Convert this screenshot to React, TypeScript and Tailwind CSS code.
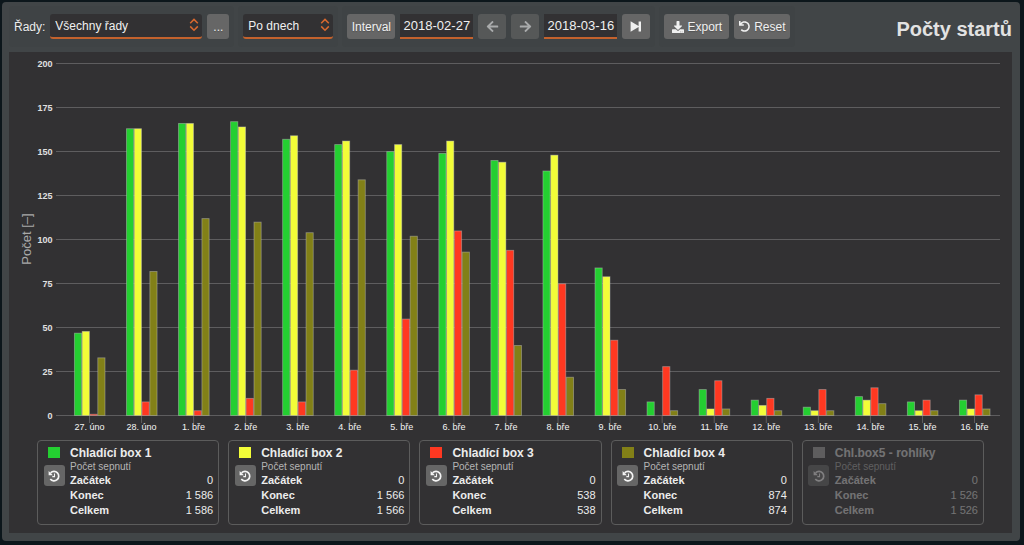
import { FaArrowLeft, FaArrowRight, FaDownload, FaUndo } from 'react-icons/fa';

const SERIES = [
  { name: 'Chladící box 1', color: '#24cf31', start: '0', end: '1 586', total: '1 586', off: false },
  { name: 'Chladící box 2', color: '#f2fd38', start: '0', end: '1 566', total: '1 566', off: false },
  { name: 'Chladící box 3', color: '#ff3821', start: '0', end: '538', total: '538', off: false },
  { name: 'Chladící box 4', color: '#828017', start: '0', end: '874', total: '874', off: false },
  { name: 'Chl.box5 - rohlíky', color: '#a0a0a0', start: '0', end: '1 526', total: '1 526', off: true },
];

// den + počty startů pro box 1-4
const DAYS: [string, number[]][] = [
  ['27. úno', [47, 48, 1, 33]],
  ['28. úno', [163, 163, 8, 82]],
  ['1. bře', [166, 166, 3, 112]],
  ['2. bře', [167, 164, 10, 110]],
  ['3. bře', [157, 159, 8, 104]],
  ['4. bře', [154, 156, 26, 134]],
  ['5. bře', [150, 154, 55, 102]],
  ['6. bře', [149, 156, 105, 93]],
  ['7. bře', [145, 144, 94, 40]],
  ['8. bře', [139, 148, 75, 22]],
  ['9. bře', [84, 79, 43, 15]],
  ['10. bře', [8, 0, 28, 3]],
  ['11. bře', [15, 4, 20, 4]],
  ['12. bře', [9, 6, 10, 3]],
  ['13. bře', [5, 3, 15, 3]],
  ['14. bře', [11, 9, 16, 7]],
  ['15. bře', [8, 3, 9, 3]],
  ['16. bře', [9, 4, 12, 4]],
];

const TICKS = [0, 25, 50, 75, 100, 125, 150, 175, 200];

const LEFT = 47;
const RIGHT = 991;
const BASE = 364;
const UNIT = 1.7625;
const STEP = 52.06;
const BAR = 7.8;

export default function App() {
  return (
    <div className="min-h-screen bg-[#0c161b] pt-0.5 pr-1 pb-1 pl-0.5 font-['Liberation_Sans',Arial,sans-serif] text-[#ececec]">
      <main className="rounded bg-[#414547] pt-1 pr-2 pb-2 pl-[7px]">
        <header className="flex items-center justify-between pb-[5px]">
          <div className="flex gap-1">
            <Group>
              <label htmlFor="rows" className="text-xs text-shadow-xs">Řady:</label>
              <Select id="rows" options={['Všechny řady', 'Chladící box 1', 'Chladící box 2']} className="w-[152px]" />
              <button type="button" aria-label="Vybrat řady" className={`${BTN} w-[22px]`}>...</button>
            </Group>
            <Group>
              <Select id="step" label="Krok" options={['Po dnech', 'Po týdnech']} className="w-[90px]" />
            </Group>
            <Group>
              <button type="button" className={`${BTN} w-12`}>Interval</button>
              <DateField label="Od" value="2018-02-27" />
              <button type="button" aria-label="Předchozí" disabled className={`${BTN} w-7 opacity-60`}><FaArrowLeft size={13} /></button>
              <button type="button" aria-label="Další" disabled className={`${BTN} w-7 opacity-60`}><FaArrowRight size={13} /></button>
              <DateField label="Do" value="2018-03-16" />
              <button type="button" aria-label="Na konec" className={`${BTN} w-7`}>
                <svg viewBox="0 0 12 11" className="h-[11px] w-3" fill="currentColor">
                  <path d="M0.6 0.3 8.6 5.1V0.6h2.4v9.8H8.6V5.9L0.6 10.7z" />
                </svg>
              </button>
            </Group>
            <Group>
              <button type="button" className={`${BTN} w-[65px]`}><FaDownload size={12} />Export</button>
              <button type="button" className={`${BTN} w-14`}><FaUndo size={11} />Reset</button>
            </Group>
          </div>
          <h1 className="pt-1 text-xl font-bold whitespace-nowrap text-[#e2e2e2]">Počty startů</h1>
        </header>

        <section className="bg-[#323133] pb-2">
          <Chart />
          <div className="grid grid-cols-5 gap-[9px] px-7">
            {SERIES.map((s) => (
              <article key={s.name} className="flex rounded border border-[#5c5c5c] px-[5px] pt-1 pb-1.5">
                <div className={`flex w-[22px] flex-col items-center gap-[7px] pt-0.5 ${s.off ? 'opacity-40' : ''}`}>
                  <span className="h-[11px] w-3" style={{ backgroundColor: s.color }}></span>
                  <button type="button" aria-label={`Obnovit ${s.name}`} className="flex h-[21px] w-[21px] items-center justify-center rounded-[3px] bg-[#666] text-[#f4f4f4]">
                    <HistoryIcon />
                  </button>
                </div>
                <div className={`flex-1 pl-[5px] ${s.off ? 'opacity-35' : ''}`}>
                  <h2 className="text-xs leading-4 font-bold whitespace-nowrap">{s.name}</h2>
                  <p className="text-[10px] leading-3 text-[#b5b5b5]">Počet sepnutí</p>
                  <dl className="text-[11px] leading-[15px]">
                    <Row label="Začátek" value={s.start} />
                    <Row label="Konec" value={s.end} />
                    <Row label="Celkem" value={s.total} />
                  </dl>
                </div>
              </article>
            ))}
          </div>
        </section>
      </main>
    </div>
  );
}

const BTN = 'flex h-[25px] items-center justify-center gap-1 rounded-[3px] bg-[#666] text-xs text-[#f0f0f0] text-shadow-xs';

function Group({ children }: { children: React.ReactNode }) {
  return <div className="flex items-center gap-[5px] rounded bg-[#3f4345] px-[5px] py-2">{children}</div>;
}

function Select({ id, label, options, className }: { id: string; label?: string; options: string[]; className: string }) {
  return (
    <div className="relative">
      <select
        id={id}
        aria-label={label}
        className={`block h-[25px] appearance-none rounded-[3px] border-b-2 border-[#c4622d] bg-[#323133] pl-[5px] text-xs text-[#f0f0f0] ${className}`}
      >
        {options.map((o) => <option key={o}>{o}</option>)}
      </select>
      <svg viewBox="0 0 10 14" className="pointer-events-none absolute top-1 right-[3px] h-[14px] w-[10px]" fill="none" stroke="#d9692f" strokeWidth="1.5">
        <path d="M1.2 5.2 5 1.4l3.8 3.8M1.2 8.4 5 12.2l3.8-3.8" />
      </svg>
    </div>
  );
}

function DateField({ label, value }: { label: string; value: string }) {
  return (
    <input
      type="text"
      aria-label={label}
      defaultValue={value}
      className="h-[25px] w-[73px] border-b-2 border-[#c4622d] bg-[#323133] text-center text-[13px] text-[#f0f0f0]"
    />
  );
}

function HistoryIcon() {
  return (
    <svg viewBox="0 0 12 12" className="h-3 w-3" fill="none" stroke="currentColor">
      <path d="M2.6 2.9A4.7 4.7 0 1 1 2.3 9" strokeWidth="1.7" />
      <path d="M0.6 0.9v4.3h4.3z" fill="currentColor" stroke="none" />
      <path d="M6.5 3.6v3H4.3" strokeWidth="1.1" />
    </svg>
  );
}

function Row({ label, value }: { label: string; value: string }) {
  return (
    <div className="flex justify-between">
      <dt className="font-bold">{label}</dt>
      <dd>{value}</dd>
    </div>
  );
}

function Chart() {
  return (
    <svg viewBox="0 0 1003 388" className="block w-full" role="img" aria-label="Počty startů">
      {TICKS.map((t) => {
        const y = Math.round(BASE - t * UNIT) - 0.5;
        return (
          <g key={t}>
            <line x1={LEFT} x2={RIGHT} y1={y} y2={y} stroke="#5e5d5f" />
            <text x="43.5" y={y + 3.5} textAnchor="end" fontSize="9" fontWeight="bold" fill="#e0e0e0">{t}</text>
          </g>
        );
      })}
      <text transform="translate(22 187) rotate(-90)" textAnchor="middle" fontSize="13" fill="#a8a8a8">Počet [–]</text>
      {DAYS.map(([day, values], i) => {
        const cx = 80.5 + i * STEP;
        return (
          <g key={day}>
            <line x1={cx} x2={cx} y1={BASE} y2={BASE + 7} stroke="#5e5d5f" />
            {values.map((v, k) => v > 0 && (
              <rect
                key={k}
                x={cx - 15.1 + k * BAR}
                y={BASE - v * UNIT}
                width={BAR - 0.6}
                height={v * UNIT - 0.5}
                fill={SERIES[k].color}
                stroke="#c8c8c8"
                strokeOpacity="0.45"
                strokeWidth="0.9"
              />
            ))}
            <text x={cx} y="378" textAnchor="middle" fontSize="9" fill="#f4f4f4">{day}</text>
          </g>
        );
      })}
    </svg>
  );
}
